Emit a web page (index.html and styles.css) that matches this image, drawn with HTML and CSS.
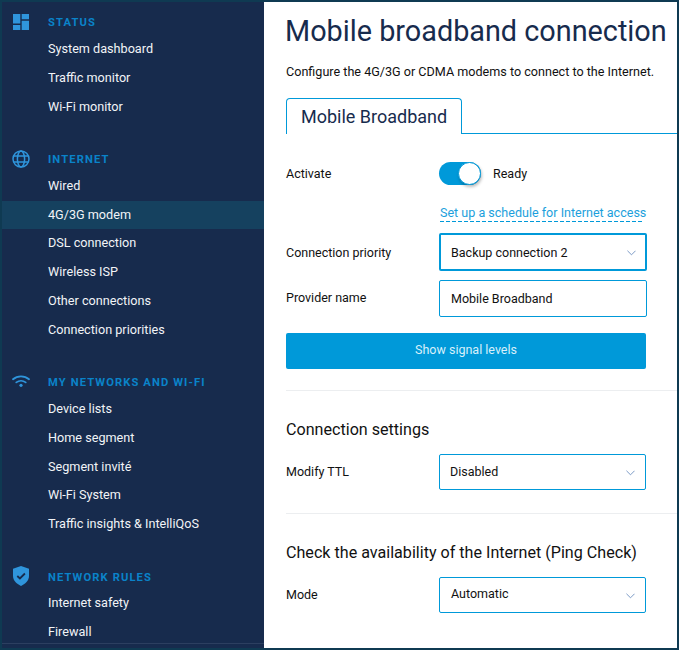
FILE: index.html
```html
<!DOCTYPE html>
<html lang="en">
<head>
<meta charset="utf-8">
<title>Mobile broadband connection</title>
<link rel="stylesheet" href="styles.css">
</head>
<body>
<div class="frame">
  <nav class="sidebar">
    <section class="group group-status">
      <h2 class="group-title">
        <svg class="group-icon icon-status" viewBox="0 0 16 16"><path d="M0 0h7.300v9.500H0zM8.700 0h7.300v5.300H8.700zM0 11h7.300v5H0zM8.700 6.800h7.300V16H8.700z"/></svg>
        STATUS
      </h2>
      <a class="item">System dashboard</a>
      <a class="item">Traffic monitor</a>
      <a class="item">Wi-Fi monitor</a>
    </section>
    <section class="group group-internet">
      <h2 class="group-title">
        <svg class="group-icon icon-globe" viewBox="0 0 18 18"><g fill="none" stroke="currentColor" stroke-width="1.500"><circle cx="9" cy="9" r="8"/><ellipse cx="9" cy="9" rx="3.600" ry="8"/><path d="M1.500 6h15M1.500 12h15"/></g></svg>
        INTERNET
      </h2>
      <a class="item">Wired</a>
      <a class="item active">4G/3G modem</a>
      <a class="item">DSL connection</a>
      <a class="item">Wireless ISP</a>
      <a class="item">Other connections</a>
      <a class="item">Connection priorities</a>
    </section>
    <section class="group group-networks">
      <h2 class="group-title">
        <svg class="group-icon icon-wifi" viewBox="0 0 18 12"><g fill="none" stroke="currentColor" stroke-width="1.800" stroke-linecap="round"><path d="M1 4.200C5.500.300 12.500.300 17 4.200"/><path d="M4.300 7.400C7 5.400 11 5.400 13.700 7.400"/></g><circle cx="9" cy="10.300" r="1.600"/></svg>
        MY NETWORKS AND WI-FI
      </h2>
      <a class="item">Device lists</a>
      <a class="item">Home segment</a>
      <a class="item">Segment invité</a>
      <a class="item">Wi-Fi System</a>
      <a class="item">Traffic insights &amp; IntelliQoS</a>
    </section>
    <section class="group group-rules">
      <h2 class="group-title">
        <svg class="group-icon icon-shield" viewBox="0 0 16 20"><path d="M8 0l8 2.800v7c0 4.600-3.300 8-8 10.200-4.700-2.200-8-5.600-8-10.200v-7z"/><path class="check" d="M4.300 10l2.600 2.500 5-5"/></svg>
        NETWORK RULES
      </h2>
      <a class="item">Internet safety</a>
      <a class="item">Firewall</a>
    </section>
    <div class="sidebar-foot"></div>
  </nav>

  <main class="main">
    <h1 class="title">Mobile broadband connection</h1>
    <p class="intro">Configure the 4G/3G or CDMA modems to connect to the Internet.</p>
    <div class="tabs"><div class="tab">Mobile Broadband</div></div>

    <div class="row row-activate">
      <span class="label">Activate</span>
      <div class="toggle-wrap">
        <span class="toggle"><span class="knob"></span></span>
        <span class="state">Ready</span>
      </div>
    </div>
    <div class="row row-link">
      <span></span>
      <a class="schedule">Set up a schedule for Internet access</a>
    </div>
    <div class="row row-priority">
      <span class="label">Connection priority</span>
      <div class="control focused"><span>Backup connection 2</span>
        <svg class="chevron" viewBox="0 0 10 6"><path d="M.5.500L5 5 9.500.500"/></svg></div>
    </div>
    <div class="row row-provider">
      <span class="label label-up">Provider name</span>
      <div class="control input"><span>Mobile Broadband</span></div>
    </div>
    <button class="primary">Show signal levels</button>
    <hr class="divider divider-first">

    <h3 class="heading">Connection settings</h3>
    <div class="row row-ttl">
      <span class="label label-up">Modify TTL</span>
      <div class="control plain"><span>Disabled</span>
        <svg class="chevron" viewBox="0 0 10 6"><path d="M.5.500L5 5 9.500.500"/></svg></div>
    </div>
    <hr class="divider divider-second">

    <h3 class="heading">Check the availability of the Internet (Ping Check)</h3>
    <div class="row row-ttl">
      <span class="label label-up">Mode</span>
      <div class="control plain mode"><span>Automatic</span>
        <svg class="chevron" viewBox="0 0 10 6"><path d="M.5.500L5 5 9.500.500"/></svg></div>
    </div>
  </main>
</div>
</body>
</html>
```
FILE: styles.css
```css
* { box-sizing: border-box; }
html, body { margin: 0; height: 100%; overflow: hidden; }
body {
  font-family: Roboto, "Liberation Sans", sans-serif;
  font-size: 12.650px;
  color: #172b4d;
  background: #0f3a52;
}
.frame {
  display: flex;
  height: 650px;
  padding: 2px;
  background: #0f3a52;
}
.sidebar {
  position: relative;
  flex: 0 0 262px;
  background: #172b4d;
  overflow: hidden;
}
.group-status { padding-top: 12px; }
.group-title {
  display: flex;
  align-items: center;
  height: 16px;
  margin: 0 0 5px;
  padding-left: 46px;
  position: relative;
  font-size: 11.200px;
  font-weight: 700;
  letter-spacing: 1.100px;
  color: #0a83c9;
}
.group-internet { margin-top: 30.600px; }
.group-internet .group-title { margin-bottom: 3.800px; }
.group-networks { margin-top: 30.400px; }
.group-networks .group-title { margin-bottom: 4px; }
.group-rules { margin-top: 31px; }
.group-rules .group-title { margin-bottom: 3px; }
.group-icon {
  position: absolute;
  top: 50%;
  transform: translateY(-50%);
  fill: #2f95dc;
  color: #2f95dc;
}
.icon-status { left: 11px; width: 16px; height: 16px; }
.icon-globe { left: 10px; width: 18px; height: 18px; margin-top: -1px; }
.icon-wifi { left: 10px; width: 18px; height: 12px; margin-top: -2px; }
.icon-shield { left: 11px; width: 16px; height: 20px; margin-top: -2px; }
.check { fill: none; stroke: #172b4d; stroke-width: 1.800; }
.item {
  display: block;
  height: 28.800px;
  line-height: 28.800px;
  padding-left: 46px;
  color: #f2f4f7;
  white-space: nowrap;
}
.item.active { background: #15415f; }
.sidebar-foot {
  position: absolute;
  left: 0;
  right: 0;
  top: 641px;
  height: 1px;
  background: #2c3f60;
}
.main {
  flex: 1 1 auto;
  min-width: 0;
  background: #fff;
  padding: 0 0 0 22px;
  overflow: hidden;
}
.title {
  margin: 12px 0 0 -1px;
  font-size: 28.800px;
  font-weight: 400;
  line-height: 34px;
  white-space: nowrap;
  color: #172b4d;
}
.intro {
  margin: 16px 0 0;
  font-size: 12.600px;
  line-height: 16px;
  color: #111;
}
.tabs {
  display: flex;
  margin-top: 18px;
  height: 36px;
  border-bottom: 1px solid #0099d9;
}
.tab {
  width: 176px;
  height: 36px;
  padding-left: 14px;
  line-height: 35px;
  font-size: 18px;
  color: #172b4d;
  background: #fff;
  border: 1px solid #0099d9;
  border-bottom: 0;
  border-radius: 4px 4px 0 0;
}
.row {
  display: grid;
  grid-template-columns: 153px 208px;
  align-items: center;
  color: #111;
}
.label { font-size: 12.500px; }
.label-up { position: relative; top: -1px; }
.row-activate { margin-top: 27px; height: 24px; }
.toggle-wrap { display: flex; align-items: center; gap: 12px; }
.toggle {
  display: block;
  position: relative;
  width: 42px;
  height: 23px;
  border-radius: 12px;
  background: #0099d9;
}
.knob {
  position: absolute;
  right: 0;
  top: 0;
  width: 23px;
  height: 23px;
  border-radius: 50%;
  background: #fff;
  border: 1px solid #0099d9;
  box-shadow: 1px 2px 3px rgba(0,0,0,.25);
}
.state { font-size: 12.500px; }
.row-link { margin-top: 20px; height: 18px; }
.schedule {
  display: block;
  width: 207px;
  height: 15px;
  padding-left: 1px;
  font-size: 12.560px;
  line-height: 11px;
  color: #1c9fdc;
  background: repeating-linear-gradient(90deg, #0099d9 0 4px, transparent 4px 6px) 1px 100% / 202px 1px no-repeat;
  white-space: nowrap;
}
.control {
  display: flex;
  align-items: center;
  justify-content: space-between;
  height: 36px;
  padding: 0 10px 0 11px;
  background: #fff;
  border: 1px solid #0099d9;
  border-radius: 2px;
  font-size: 12.500px;
  color: #111;
}
.row-priority { margin-top: 10px; }
.control.focused { height: 38px; border-width: 2px; padding: 0 9px 0 10px; }
.row-provider { margin-top: 9px; }
.control.input { height: 37px; }
.control.plain { width: 207px; padding-left: 10px; }
.control.plain span { position: relative; top: -1px; }
.control.mode { padding-left: 11px; }
.control.mode span { top: -2px; }
.chevron {
  width: 9px;
  height: 6px;
  fill: none;
  stroke: #6d8fbf;
  stroke-width: 1;
  margin-top: 2px;
}
.primary {
  display: block;
  width: 360px;
  height: 36px;
  margin: 16px 0 0;
  padding: 0 0 3px;
  border: 0;
  border-radius: 2px;
  background: #0099d9;
  color: #d8f0fb;
  font: 400 12.500px Roboto, "Liberation Sans", sans-serif;
}
.divider {
  height: 1px;
  margin: 0;
  border: 0;
  background: #eceef0;
}
.divider-first { margin-top: 21px; }
.divider-second { margin-top: 23px; }
.heading {
  margin: 29px 0 0;
  font-size: 16.130px;
  font-weight: 400;
  line-height: 20px;
  color: #111;
  white-space: nowrap;
}
.row-ttl { margin-top: 14px; }
```
